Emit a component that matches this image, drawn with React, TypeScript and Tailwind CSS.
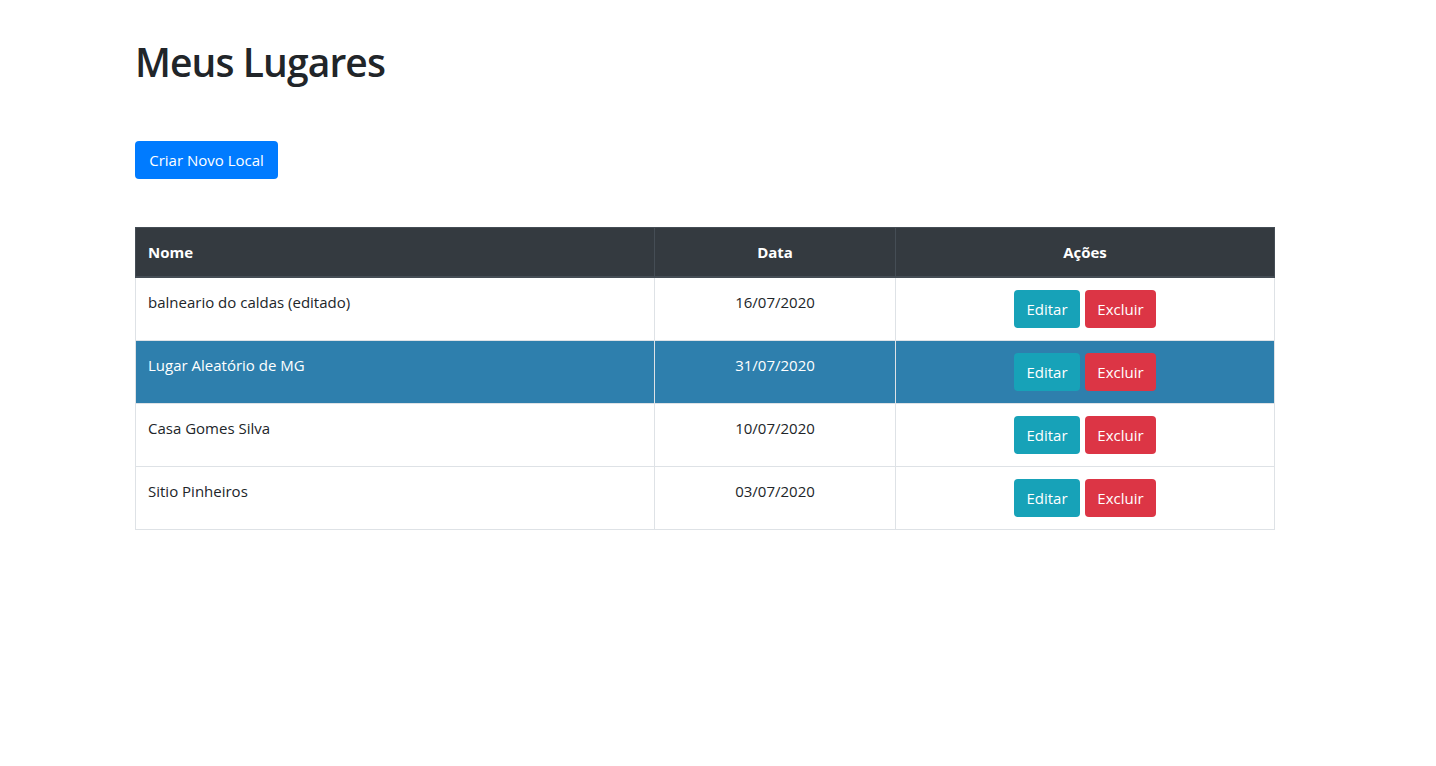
import React from "react";

const rows = [
  { nome: "balneario do caldas (editado)", data: "16/07/2020", active: false },
  { nome: "Lugar Aleatório de MG", data: "31/07/2020", active: true },
  { nome: "Casa Gomes Silva", data: "10/07/2020", active: false },
  { nome: "Sitio Pinheiros", data: "03/07/2020", active: false },
];

export default function App() {
  return (
    <div
      className="min-h-[766px] bg-white text-[#212529]"
      style={{ fontFamily: '"Open Sans", "Noto Sans", Arial, sans-serif' }}
    >
      <div className="ml-[135px] w-[1140px] pt-[38px]">
        <h1 className="text-[39px] font-semibold leading-[48px] tracking-[-0.9px] text-[#212529]">
          Meus Lugares
        </h1>
        <button className="mt-[55px] h-[38px] w-[143px] rounded-[4px] bg-[#007bff] text-[15px] leading-[24px] text-white">
          Criar Novo Local
        </button>
        <table className="mt-[48px] w-[1140px] border-collapse text-[15px] leading-[24px]">
          <thead>
            <tr className="bg-[#343a40] text-white">
              <th className="w-[519px] border border-[#454d55] border-b-2 px-[12px] py-[12px] text-left font-bold">
                Nome
              </th>
              <th className="w-[241px] border border-[#454d55] border-b-2 px-[12px] py-[12px] text-center font-bold">
                Data
              </th>
              <th className="border border-[#454d55] border-b-2 px-[12px] py-[12px] text-center font-bold">
                Ações
              </th>
            </tr>
          </thead>
          <tbody>
            {rows.map((r) => (
              <tr
                key={r.nome}
                className={r.active ? "bg-[#2e7fad] text-white" : "bg-white text-[#212529]"}
              >
                <td className="border border-[#dee2e6] px-[12px] py-[12px] align-top">{r.nome}</td>
                <td className="border border-[#dee2e6] px-[12px] py-[12px] text-center align-top">
                  {r.data}
                </td>
                <td className="border border-[#dee2e6] px-[12px] py-[12px] text-center align-top">
                  <div className="flex justify-center gap-[5px]">
                    <button className="h-[38px] w-[66px] rounded-[4px] bg-[#17a2b8] text-[15px] text-white">
                      Editar
                    </button>
                    <button className="h-[38px] w-[71px] rounded-[4px] bg-[#dc3545] text-[15px] text-white">
                      Excluir
                    </button>
                  </div>
                </td>
              </tr>
            ))}
          </tbody>
        </table>
      </div>
    </div>
  );
}
